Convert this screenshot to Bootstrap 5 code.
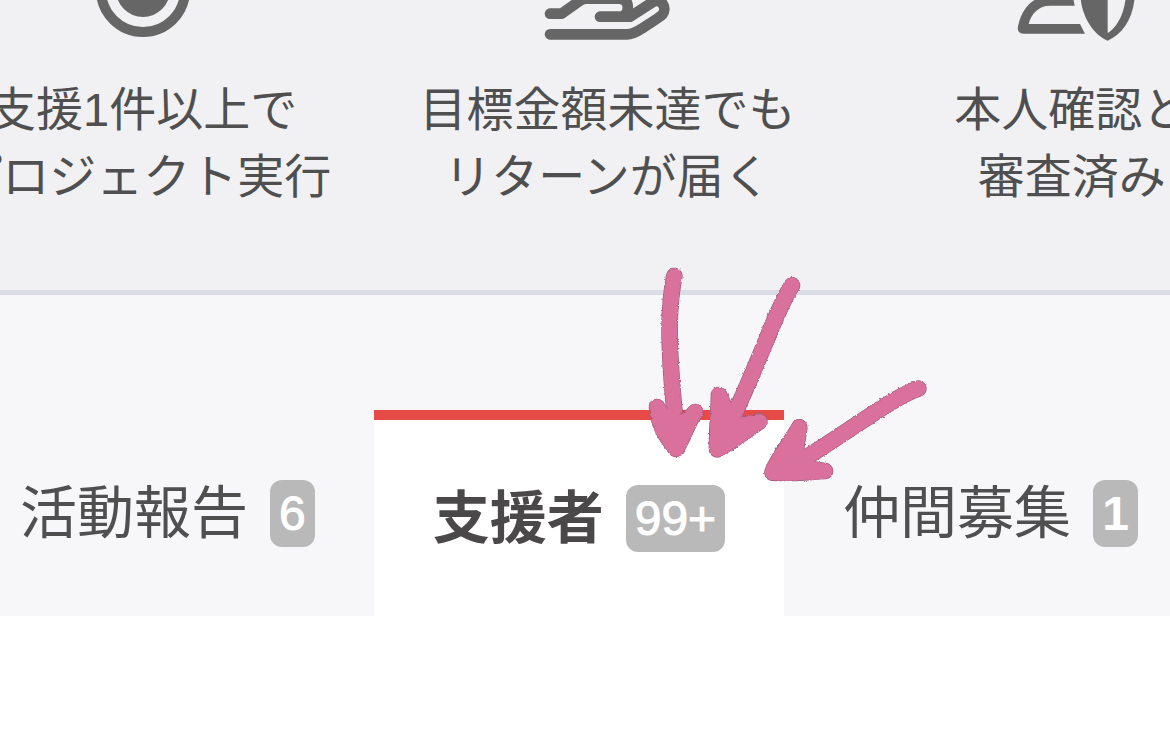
<!DOCTYPE html>
<html lang="ja">
<head>
<meta charset="utf-8">
<meta name="viewport" content="width=device-width, initial-scale=1">
<title>支援者</title>
<link href="https://cdn.jsdelivr.net/npm/bootstrap@5.3.0/dist/css/bootstrap.min.css" rel="stylesheet">
<style>
  body { font-family: "Liberation Sans", "Noto Sans CJK JP", sans-serif; color: #4f4f4f; background: #fff; }
  .feature-strip { background: #f1f1f4; border-bottom: 5px solid #dadce6; padding-bottom: 80px; }
  /* the strip is wider than the window and runs off both sides */
  .feature-list { margin-left: -89px; margin-right: -134px; }
  .feature-icon { display: block; margin: 0 auto 26px; color: #666; }
  .feature-text { font-size: 47px; line-height: 67px; }
  .tab-zone { background: #f7f7fa; padding-top: 115px; }
  .page-tabs { margin-left: -39px; }
  .page-tabs .nav-link { display: flex; align-items: center; gap: 22px; height: 206px; padding: 0 59px; border-radius: 0; color: #4f4f4f; font-size: 57px; line-height: 67px; white-space: nowrap; }
  .page-tabs .nav-link.active { background: #fff; color: #4a4848; border-top: 10px solid #e64b48; font-weight: 700; }
  .tab-count { background: #b9b9b9; color: #fff; border-radius: 12px; padding: 0 9px; font-size: 48px; line-height: 67px; font-weight: 400; -webkit-text-stroke: 1px #fff; }
  .tab-count-strong { font-weight: 700; -webkit-text-stroke: 0; }
  .marker-arrows { position: absolute; left: 256px; top: -160px; z-index: 2; pointer-events: none; }
</style>
</head>
<body>
<main class="overflow-hidden">
  <section class="feature-strip">
    <div class="feature-list row g-0 text-center text-nowrap">
      <div class="col-4">
        <svg class="feature-icon" width="160" height="50" viewBox="0 0 160 50" aria-hidden="true">
          <circle cx="80" cy="-10" r="42" fill="none" stroke="currentColor" stroke-width="10"/>
          <circle cx="80" cy="-10" r="27" fill="currentColor"/>
        </svg>
        <div class="feature-text">支援1件以上で<br>プロジェクト実行</div>
      </div>
      <div class="col-4">
        <svg class="feature-icon" width="160" height="50" viewBox="-9 0 480 150" fill="none" stroke="currentColor" stroke-width="32" stroke-linecap="round" stroke-linejoin="round" aria-hidden="true">
          <path d="M60 41H95L150 2Q158-4 170-4H270Q290-2 293 16Q296 50 265 50H210H300L370 5C395-7 413 25 397 44Q392 50 335 86Q310 103 290 103H60"/>
        </svg>
        <div class="feature-text">目標金額未達でも<br>リターンが届く</div>
      </div>
      <div class="col-4">
        <svg class="feature-icon" width="160" height="50" viewBox="-24 0 480 150" fill="currentColor" aria-hidden="true">
          <path d="M218-14H155C105-14 68 18 55 75C50 92 57 101 70 101H255L240 72H86C94 40 117 17 150 17H224Z"/>
          <path fill-rule="evenodd" d="M242-30V-5C246 48 280 105 323 122C370 102 405 50 405-30ZM323-30V99C352 82 377 38 379-30Z"/>
        </svg>
        <div class="feature-text">本人確認と<br>審査済み</div>
      </div>
    </div>
  </section>

  <div class="tab-zone">
    <ul class="page-tabs nav flex-nowrap">
      <li class="nav-item"><a class="nav-link" href="#report">活動報告<span class="tab-count">6</span></a></li>
      <li class="nav-item position-relative">
        <a class="nav-link active" aria-current="page" href="#supporters">支援者<span class="tab-count">99+</span></a>
        <svg class="marker-arrows" width="310" height="250" viewBox="0 0 930 750" aria-hidden="true">
          <defs>
            <filter id="crayon" x="-5%" y="-5%" width="110%" height="110%">
              <feTurbulence type="fractalNoise" baseFrequency="0.12" numOctaves="2" seed="4"/>
              <feDisplacementMap in="SourceGraphic" scale="8" xChannelSelector="R" yChannelSelector="G"/>
            </filter>
            <g id="strokes" stroke-linecap="round" stroke-linejoin="round">
              <path fill="none" d="M133 78C115 170 113 270 133 480M486 106C440 175 395 320 305 510M865 416C790 440 650 550 500 640"/>
              <path d="M81 471C88 530 105 555 138 597C160 565 175 510 196 486C175 510 155 525 138 520C118 518 92 500 81 471Z"/>
              <path d="M267 435C266 490 260 550 261 598C290 585 330 555 388 515L310 530Z"/>
              <path d="M508 532C480 580 440 630 427 668C480 672 540 665 585 663L490 650Z"/>
            </g>
          </defs>
          <g filter="url(#crayon)">
            <use href="#strokes" fill="#9a5a7b" stroke="#9a5a7b" stroke-width="50"/>
            <use href="#strokes" fill="#da719d" stroke="#da719d" stroke-width="46"/>
          </g>
        </svg>
      </li>
      <li class="nav-item"><a class="nav-link" href="#members">仲間募集<span class="tab-count tab-count-strong">1</span></a></li>
    </ul>
  </div>
</main>
<script src="https://cdn.jsdelivr.net/npm/bootstrap@5.3.0/dist/js/bootstrap.bundle.min.js"></script>
</body>
</html>
